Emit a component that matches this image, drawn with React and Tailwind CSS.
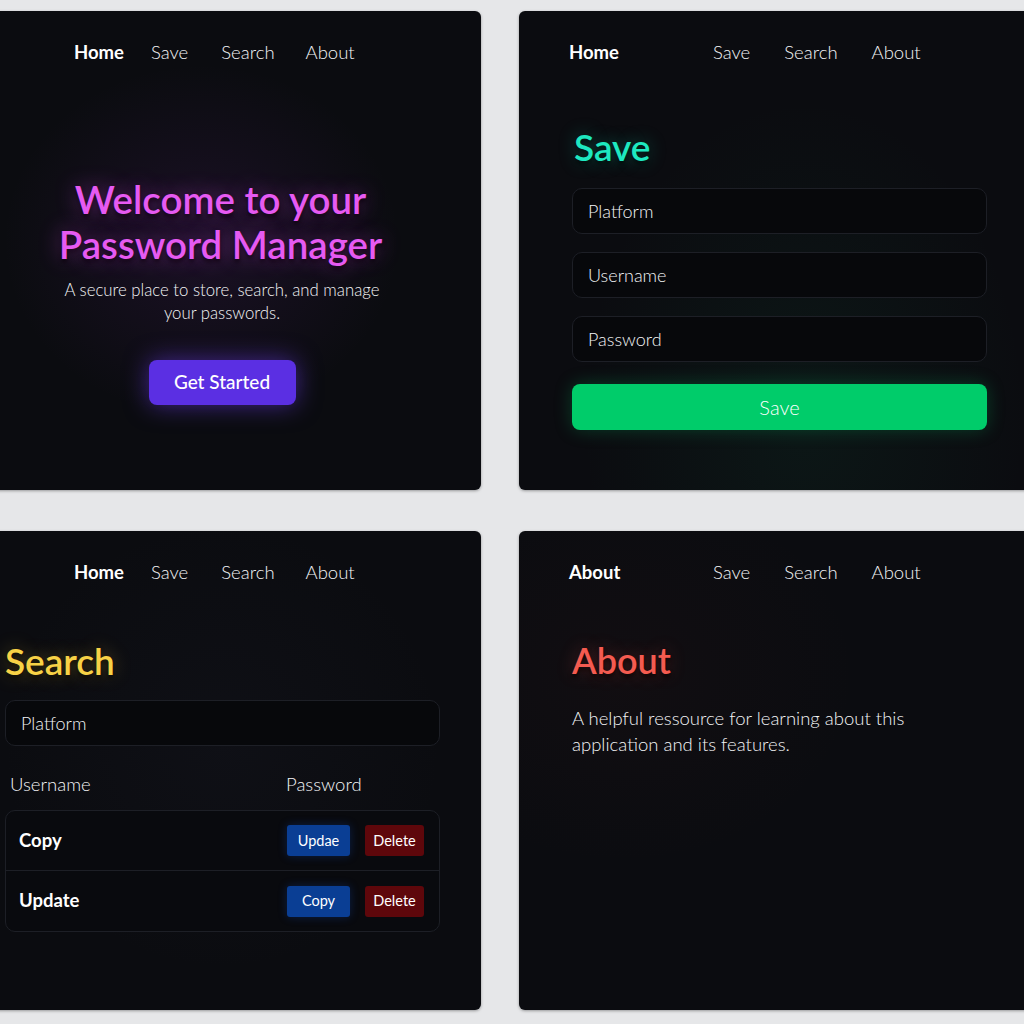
import React from 'react';

const font = { fontFamily: 'Lato, "Noto Sans", sans-serif' };

function NavCentered({ active }) {
    return (
        <div className="flex items-center pl-[111px] pt-[29px] text-[18.5px] leading-6">
            <span className="font-bold text-white">{active}</span>
            <span className="ml-[27px] font-light text-gray-100">Save</span>
            <span className="ml-[33px] font-light text-gray-100">Search</span>
            <span className="ml-[31px] font-light text-gray-100">About</span>
        </div>
    );
}

function NavLeft({ active }) {
    return (
        <div className="flex items-center pl-[50px] pt-[29px] text-[18.5px] leading-6">
            <span className="w-[144px] font-bold text-white">{active}</span>
            <span className="font-light text-gray-100">Save</span>
            <span className="ml-[34px] font-light text-gray-100">Search</span>
            <span className="ml-[34px] font-light text-gray-100">About</span>
        </div>
    );
}

function Panel({ children, glow }) {
    return (
        <div className={`h-[479px] overflow-hidden rounded-md bg-[#0b0c10] shadow-[0_1px_3px_rgba(0,0,0,0.35)] ${glow}`}>
            {children}
        </div>
    );
}

function HomePanel() {
    return (
        <Panel glow="bg-[radial-gradient(ellipse_at_46%_48%,rgba(110,40,150,0.16),rgba(11,12,16,0)_50%)]">
            <NavCentered active="Home" />
            <div className="mt-[113px] flex flex-col items-center text-center">
                <h1 className="pr-[3px] text-[38.5px] font-semibold leading-[45px] text-[#e65af2] [text-shadow:0_0_22px_rgba(217,70,239,0.45),0_3px_4px_rgba(0,0,0,0.9)]">
                    Welcome to your
                    <br />
                    Password Manager
                </h1>
                <p className="mt-[11px] text-[16.75px] font-light leading-[23px] text-gray-100">
                    A secure place to store, search, and manage
                    <br />
                    your passwords.
                </p>
                <button className="mt-[36px] h-[45px] w-[147px] rounded-lg bg-[#5b2fe3] text-[19px] font-medium text-white shadow-[0_0_24px_rgba(110,60,240,0.55)]">
                    Get Started
                </button>
            </div>
        </Panel>
    );
}

function Field({ label, className }) {
    return (
        <div className={`flex h-[46px] items-center rounded-[10px] border border-[#1d1f26] bg-[#07080b] px-[15px] text-[18px] font-light text-gray-100 ${className}`}>
            {label}
        </div>
    );
}

function SavePanel() {
    return (
        <Panel glow="bg-[radial-gradient(ellipse_at_55%_85%,rgba(20,120,80,0.10),rgba(11,12,16,0)_55%)]">
            <NavLeft active="Home" />
            <div className="px-[53px] pr-[50px]">
                <h2 className="mt-[60px] pl-[2px] text-[37px] font-semibold leading-[46px] text-[#1ee8c0] [text-shadow:0_0_18px_rgba(30,232,192,0.35),0_3px_4px_rgba(0,0,0,0.9)]">
                    Save
                </h2>
                <div className="mt-[18px] flex flex-col gap-[18px]">
                    <Field label="Platform" />
                    <Field label="Username" />
                    <Field label="Password" />
                </div>
                <button className="mt-[22px] h-[46px] w-full rounded-lg bg-[#00cc6a] text-[20px] font-light text-white shadow-[0_0_18px_rgba(0,204,106,0.25)]">
                    Save
                </button>
            </div>
        </Panel>
    );
}

function Row({ name, first, border }) {
    return (
        <div className={`flex h-[60px] items-center justify-between pl-[13px] pr-[15px] ${border}`}>
            <span className="text-[18.5px] font-bold text-white">{name}</span>
            <div className="flex gap-[15px]">
                <button className="h-[31px] w-[63px] rounded-[3px] bg-[#0a3e94] text-[14.5px] text-white shadow-[0_0_10px_rgba(20,80,200,0.3)]">
                    {first}
                </button>
                <button className="h-[31px] w-[59px] rounded-[3px] bg-[#5e070b] text-[14.5px] text-white">
                    Delete
                </button>
            </div>
        </div>
    );
}

function SearchPanel() {
    return (
        <Panel glow="bg-[radial-gradient(ellipse_at_50%_45%,rgba(60,60,90,0.08),rgba(11,12,16,0)_60%)]">
            <NavCentered active="Home" />
            <div className="pl-[42px] pr-[41px]">
                <h2 className="mt-[54px] text-[37px] font-semibold leading-[46px] text-[#f8d246] [text-shadow:0_0_18px_rgba(248,210,70,0.35),0_3px_4px_rgba(0,0,0,0.9)]">
                    Search
                </h2>
                <Field label="Platform" className="mt-[16px]" />
                <div className="mt-[26px] flex text-[18.5px] font-light leading-6 text-gray-100">
                    <span className="w-[281px] pl-[5px]">Username</span>
                    <span>Password</span>
                </div>
                <div className="mt-[14px] rounded-[10px] border border-[#1d1f26] bg-[#090a0e]">
                    <Row name="Copy" first="Updae" border="border-b border-[#1d1f26]" />
                    <Row name="Update" first="Copy" border="" />
                </div>
            </div>
        </Panel>
    );
}

function AboutPanel() {
    return (
        <Panel glow="bg-[radial-gradient(ellipse_at_20%_30%,rgba(120,40,40,0.06),rgba(11,12,16,0)_40%)]">
            <NavLeft active="About" />
            <div className="pl-[53px]">
                <h2 className="mt-[53px] text-[36px] font-semibold leading-[46px] text-[#f45b50] [text-shadow:0_0_18px_rgba(244,91,80,0.3),0_3px_4px_rgba(0,0,0,0.9)]">
                    About
                </h2>
                <p className="mt-[22px] text-[18.5px] font-light leading-[26px] text-gray-100">
                    A helpful ressource for learning about this
                    <br />
                    application and its features.
                </p>
            </div>
        </Panel>
    );
}

export default function App() {
    return (
        <div className="h-[1024px] w-[1024px] overflow-hidden bg-[#e6e7e9]" style={font}>
            <div className="ml-[-37px] grid grid-cols-[518px_518px] gap-x-[38px] gap-y-[41px] pt-[11px]">
                <HomePanel />
                <SavePanel />
                <SearchPanel />
                <AboutPanel />
            </div>
        </div>
    );
}
